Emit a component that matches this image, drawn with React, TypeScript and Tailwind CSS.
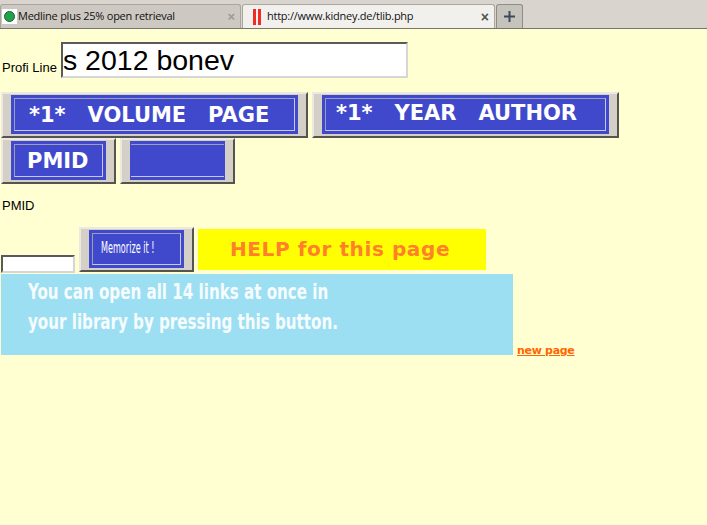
import React from 'react';

const ImageButton: React.FC<{ width: string; height: string; className?: string; flat?: boolean; children?: React.ReactNode }> = ({
  width,
  height,
  className,
  flat,
  children,
}) => (
  <div className={`${width} ${height} shrink-0 flex bg-[#d4d0c8] border-t-2 border-l-2 border-r-2 border-b-2 border-t-[#ece9e2] border-l-[#ece9e2] border-r-[#55544f] border-b-[#55544f] px-[8px] pt-[1px] pb-[2px] ${className ?? ''}`}>
    <div className={`flex-1 min-w-0 bg-[#4049cc] flex ${flat ? 'py-[3px] px-[1px]' : 'p-[3px]'}`}>
      <div className={`flex-1 min-w-0 border-t border-b border-t-[#9c9db8] border-b-[#c4c8ee] flex items-center font-['DejaVu_Sans',sans-serif] font-bold text-white whitespace-pre ${flat ? '' : 'border-l border-r border-l-[#9c9db8] border-r-[#c4c8ee]'}`}>
        {children}
      </div>
    </div>
  </div>
);

export default function App() {
  return (
    <div className="w-[707px] h-[525px] overflow-hidden bg-[#ffffd2] font-['Liberation_Sans',sans-serif] text-black">
      {/* Tab strip */}
      <div className="h-[29px] flex items-end bg-[#d9d5ce] border-b border-[#77756f] pl-0">
        <div className="w-[241px] h-[24px] flex items-center bg-[#cdc9c2] border border-b-0 border-[#a9a69f] rounded-t-[3px] pl-[1px] pr-[5px]">
          <div className="w-[15px] h-[15px] mr-[1px] flex items-center justify-center bg-white">
            <div className="w-[11px] h-[11px] rounded-full bg-[#22a34a] border border-[#1a5c30]" />
          </div>
          <span className="flex-1 font-['Open_Sans',sans-serif] text-[11px] tracking-[-0.25px] text-[#111] whitespace-nowrap">Medline plus 25% open retrieval</span>
          <span className="text-[13px] leading-none text-[#9c9a94] font-bold">×</span>
        </div>
        <div className="ml-[1px] w-[253px] h-[24px] flex items-center bg-[#f2f0ed] border border-b-0 border-[#a9a69f] rounded-t-[3px] pl-[10px] pr-[5px]">
          <div className="flex gap-[2px] mr-[6px]">
            <div className="w-[3px] h-[16px] bg-[#ee2b24]" />
            <div className="w-[3px] h-[16px] bg-[#ee2b24]" />
          </div>
          <span className="flex-1 font-['Open_Sans',sans-serif] text-[11px] tracking-[-0.25px] text-[#111] whitespace-nowrap">http://www.kidney.de/tlib.php</span>
          <span className="text-[14px] leading-none text-[#55544f] font-bold">×</span>
        </div>
        <div className="ml-[1px] w-[27px] h-[24px] flex items-center justify-center bg-[#c6c3bc] border border-b-0 border-[#908d86] rounded-t-[3px]">
          <svg width="13" height="13" viewBox="0 0 13 13">
            <path d="M6.5 1v11M1 6.5h11" stroke="#3c4a5c" strokeWidth="2" />
          </svg>
        </div>
      </div>

      {/* Search line */}
      <div className="mt-[13px] flex items-end pl-[2px]">
        <span className="text-[13px] leading-none mb-[4px]">Profi Line</span>
        <div className="ml-[4px] w-[347px] h-[36px] bg-white border-2 border-t-[#5a5a5a] border-l-[#5a5a5a] border-r-[#d6d6d6] border-b-[#d6d6d6] flex items-center text-[28.5px] leading-none">
          s 2012 bonev
        </div>
      </div>

      {/* Search buttons */}
      <div className="mt-[14px] flex pl-[1px]">
        <ImageButton width="w-[307px]" height="h-[46px]">
          <span className="pl-[14px] pt-[3px] text-[21px]">*1*   VOLUME   PAGE</span>
        </ImageButton>
        <ImageButton width="w-[307px]" height="h-[46px]" className="ml-[4px]">
          <span className="pl-[10px] pb-[1px] text-[21px]">*1*   YEAR   AUTHOR</span>
        </ImageButton>
      </div>
      <div className="flex pl-[1px]">
        <ImageButton width="w-[115px]" height="h-[46px]">
          <span className="pl-[12px] pt-[2px] text-[21px]">PMID</span>
        </ImageButton>
        <ImageButton width="w-[115px]" height="h-[46px]" className="ml-[4px]" flat />
      </div>

      <div className="mt-[14px] pl-[2px] text-[13px] leading-[15px]">PMID</div>

      {/* Memorize row */}
      <div className="mt-[14px] flex items-start pl-[1px]">
        <div className="mt-[28px] w-[74px] h-[18px] bg-white border-2 border-t-[#5a5a5a] border-l-[#5a5a5a] border-r-[#d6d6d6] border-b-[#d6d6d6]" />
        <ImageButton width="w-[115px]" height="h-[45px]" className="ml-[4px]">
          <span className="ml-[8px] pb-[2px] inline-block origin-left scale-x-[0.6] text-[15px] font-normal font-stretch-condensed">Memorize it !</span>
        </ImageButton>
        <div className="ml-[4px] mt-[2px] w-[288px] h-[41px] bg-[#ffff00] flex items-center pl-[32px] pb-[2px] font-['DejaVu_Sans',sans-serif] font-bold text-[20px] text-[#ff7f2a] tracking-[0.6px]">
          HELP for this page
        </div>
      </div>

      {/* Open all links */}
      <div className="mt-[1px] flex items-end pl-[1px]">
        <div className="w-[512px] h-[81px] bg-[#9ddff2] pl-[27px] pt-[3px] font-['DejaVu_Sans',sans-serif] font-bold font-stretch-condensed text-[21px] leading-[30px] text-[#f6fcfe] whitespace-nowrap">
          <div className="origin-left scale-x-[0.8]">You can open all 14 links at once in</div>
          <div className="origin-left scale-x-[0.8]">your library by pressing this button.</div>
        </div>
        <a href="#" className="ml-[4px] -mb-[2px] font-['DejaVu_Sans',sans-serif] font-bold text-[11px] leading-[13px] tracking-[-0.3px] text-[#ff6600] underline">new page</a>
      </div>
    </div>
  );
}
